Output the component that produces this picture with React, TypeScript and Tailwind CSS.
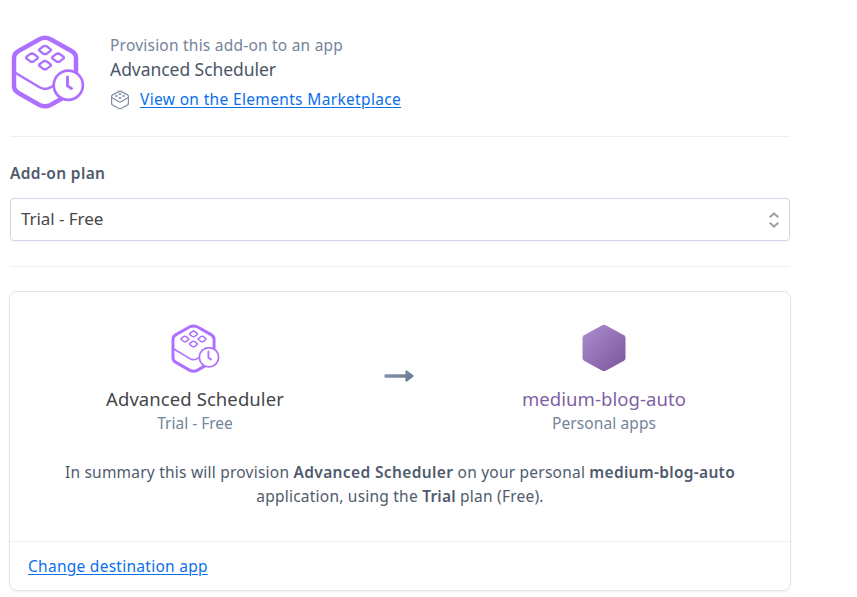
function SchedulerIcon({ className }: { className: string }) {
  return (
    <svg className={className} viewBox="0 0 74 74" fill="none" stroke="#ae70ff" strokeLinecap="round" strokeLinejoin="round">
      <path d="M28.5 4.200Q34 1.500 39.500 4.200L60.500 16Q65 18.500 65 23V51Q65 55.500 60.500 58L39.500 70Q34 72.700 28.500 70L7.500 58Q3 55.500 3 51V23Q3 18.500 7.500 16Z" strokeWidth="4.500" />
      <path d="M3 37L28.500 52.300Q34 55.500 39.500 52.300L52 45.500" strokeWidth="2.500" />
      <g strokeWidth="2.300">
        <path d="M28.300 14.300L32 11.500Q34 10.100 36 11.500L39.700 14.300Q40.300 15 39.700 15.700L36 18.500Q34 19.900 32 18.500L28.300 15.700Q27.700 15 28.300 14.300Z" />
        <path d="M15.300 22L19 19.200Q21 17.800 23 19.200L26.700 22Q27.300 22.700 26.700 23.400L23 26.200Q21 27.600 19 26.200L15.300 23.400Q14.700 22.700 15.300 22Z" />
        <path d="M41.300 22L45 19.200Q47 17.800 49 19.200L52.700 22Q53.300 22.700 52.700 23.400L49 26.200Q47 27.600 45 26.200L41.300 23.400Q40.700 22.700 41.300 22Z" />
        <path d="M28.300 29.500L32 26.700Q34 25.300 36 26.700L39.700 29.500Q40.300 30.200 39.700 30.900L36 33.700Q34 35.100 32 33.700L28.300 30.900Q27.700 30.200 28.300 29.500Z" />
      </g>
      <circle cx="57.300" cy="50.200" r="14.600" fill="white" strokeWidth="2.700" />
      <path d="M56.500 42V50.900L60.500 53.500" strokeWidth="2.900" />
    </svg>
  );
}

function ElementsIcon() {
  return (
    <svg className="mt-px block h-5 w-5 shrink-0" viewBox="0 0 20 20" fill="none" stroke="#7b8ba3" strokeWidth="1.200" strokeLinejoin="round">
      <path d="M9 1.400Q10 .9 11 1.400L17.500 4.900Q18.400 5.400 18.400 6.400V13.400Q18.400 14.400 17.500 14.900L11 18.500Q10 19 9 18.500L2.500 14.900Q1.600 14.400 1.600 13.400V6.400Q1.600 5.400 2.500 4.900Z" />
      <path d="M1.800 7.500L9 11.800Q10 12.300 11 11.800L18.200 7.500" />
      <g strokeWidth=".9">
        <ellipse cx="10" cy="4" rx="1.200" ry=".6" />
        <ellipse cx="6.500" cy="6" rx="1.200" ry=".6" />
        <ellipse cx="13.500" cy="6" rx="1.200" ry=".6" />
        <ellipse cx="10" cy="8" rx="1.200" ry=".6" />
      </g>
    </svg>
  );
}

function AppHexagon() {
  return (
    <svg className="block h-12 w-12" viewBox="0 0 48 48">
      <defs>
        <linearGradient id="app-fill" x1="0" y1="0" x2="1" y2="1">
          <stop offset="0" stopColor="#ad8dcf" />
          <stop offset="1" stopColor="#7a559b" />
        </linearGradient>
      </defs>
      <path d="M22.300 1.200Q24 .4 25.700 1.200L44 11.300Q45.500 12.200 45.500 14V34Q45.500 35.800 44 36.700L25.700 46.800Q24 47.600 22.300 46.800L4 36.700Q2.500 35.800 2.500 34V14Q2.500 12.200 4 11.300Z" fill="url(#app-fill)" />
    </svg>
  );
}

function Arrow() {
  return (
    <svg className="block h-3 w-[30px]" viewBox="0 0 30 12">
      <defs>
        <linearGradient id="arrow-fill" x1="0" y1="0" x2="1" y2="1">
          <stop offset="0" stopColor="#8b9bb3" />
          <stop offset="1" stopColor="#62738e" />
        </linearGradient>
      </defs>
      <path d="M1.500 4.200H21.500V1.300Q21.500-.6 23 .6L29.300 5.300Q30 6 29.300 6.700L23 11.400Q21.500 12.600 21.500 10.700V7.800H1.500Q.3 7.800 .3 6T1.500 4.200Z" fill="url(#arrow-fill)" />
    </svg>
  );
}

export default function App() {
  return (
    <main className="h-[597px] w-[857px] overflow-hidden bg-white pl-[9px] pt-[33px] font-['Noto_Sans','Open_Sans',sans-serif] text-[15.5px] leading-6 text-[#4f5b6c]">
      <div className="w-[782px]">
        <header className="mx-px flex h-[104px] border-b border-[#eeeff2]">
          <SchedulerIcon className="ml-px mt-0.5 block h-[74px] w-[74px]" />
          <div className="ml-[25px] whitespace-nowrap">
            <p className="tracking-[0.22px] text-[#74849a]">Provision this add-on to an app</p>
            <h1 className="text-[17.5px] tracking-[-0.05px] text-[#4b5667]">Advanced Scheduler</h1>
            <div className="mt-1.5 flex items-center gap-2.5">
              <ElementsIcon />
              <a className="tracking-[0.34px] text-[#0b70ea] underline decoration-1 underline-offset-2">View on the Elements Marketplace</a>
            </div>
          </div>
        </header>

        <section className="mx-px h-[130px] border-b border-[#eeeff2] pt-6">
          <h2 className="font-semibold tracking-[0.37px]">Add-on plan</h2>
          <div className="mt-[13px] flex h-[43px] items-center justify-between rounded border border-[#cfd7e6] pl-2.5 pr-[9px] shadow-[0_1px_2px_rgba(60,80,120,0.06)]">
            <span className="pb-0.5 text-[17px] tracking-[-0.05px] text-[#46464b]">Trial - Free</span>
            <svg className="block h-4 w-3" viewBox="0 0 12 16" fill="none" stroke="#a2a1a8" strokeWidth="2.100">
              <path d="M1.700 5.200L6 1.500L10.300 5.200M1.700 10.800L6 14.500L10.300 10.800" />
            </svg>
          </div>
        </section>

        <section className="mt-6 h-[300px] rounded-lg border border-[#e3e5e9] shadow-[0_1px_2px_rgba(0,0,0,0.07)]">
          <div className="flex h-[250px] flex-col border-b border-[#eeeff2] pt-8">
            <div className="flex">
              <div className="flex w-[370px] flex-col items-center">
                <SchedulerIcon className="block h-[49px] w-[49px]" />
                <h3 className="mt-3.5 text-[18.5px] leading-6 tracking-[0.08px] text-[#46464b]">Advanced Scheduler</h3>
                <p className="text-[#74849a]">Trial - Free</p>
              </div>
              <div className="flex w-[38px] justify-center pt-[46px]">
                <Arrow />
              </div>
              <div className="flex w-[372px] flex-col items-center">
                <div className="h-[49px]"><AppHexagon /></div>
                <h3 className="mt-3.5 text-[18.5px] leading-6 tracking-[0.08px] text-[#7f5fa4]">medium-blog-auto</h3>
                <p className="tracking-[0.1px] text-[#74849a]">Personal apps</p>
              </div>
            </div>
            <p className="mt-[25px] whitespace-nowrap text-center tracking-[0.22px]">
              In summary this will provision <strong className="font-semibold tracking-[0.37px]">Advanced Scheduler</strong> on your personal <strong className="font-semibold tracking-[0.3px]">medium-blog-auto</strong>
              <br />
              application, using the <strong className="font-semibold">Trial</strong> plan (Free).
            </p>
          </div>
          <div className="flex h-[48px] items-center pb-px pl-[18px]">
            <a className="tracking-[0.27px] text-[#0b70ea] underline decoration-1 underline-offset-2">Change destination app</a>
          </div>
        </section>
      </div>
    </main>
  );
}
